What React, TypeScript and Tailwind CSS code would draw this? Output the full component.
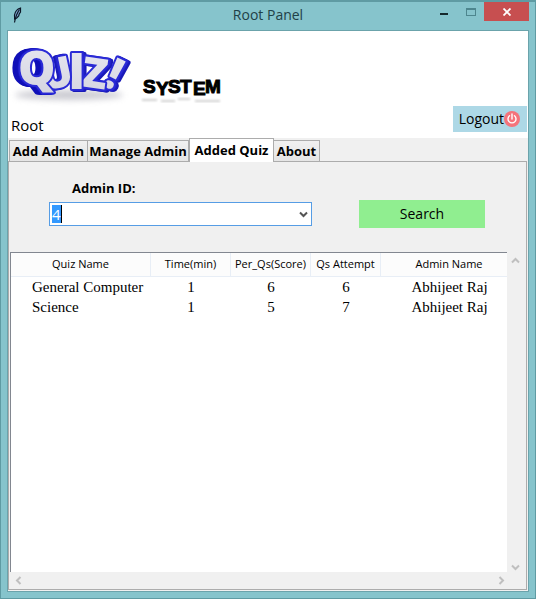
import React, { useState } from "react";

type Quiz = { name: string; time: number; score: number; attempt: number; admin: string };

const quizzes: Quiz[] = [
  { name: "General Computer", time: 1, score: 6, attempt: 6, admin: "Abhijeet Raj" },
  { name: "Science", time: 1, score: 5, attempt: 7, admin: "Abhijeet Raj" },
];

const tabs = [
  { label: "Add Admin", width: "w-[79px]" },
  { label: "Manage Admin", width: "w-[101px]" },
  { label: "Added Quiz", width: "w-[85px]" },
  { label: "About", width: "w-[46px]" },
];

const columns = [
  { label: "Quiz Name", width: "w-[140px]" },
  { label: "Time(min)", width: "w-[80px]" },
  { label: "Per_Qs(Score)", width: "w-[80px]" },
  { label: "Qs Attempt", width: "w-[70px]" },
  { label: "Admin Name", width: "" },
];

const turns = { up: "", right: "rotate-90", down: "rotate-180", left: "-rotate-90" };

function Chevron({ dir, color }: { dir: keyof typeof turns; color: string }) {
  return (
    <svg viewBox="0 0 9 9" className={`size-[9px] ${turns[dir]} ${color}`} aria-hidden="true">
      <path d="M1 6.5 4.5 3 8 6.5" fill="none" stroke="currentColor" strokeWidth="2" />
    </svg>
  );
}

function Feather() {
  return (
    <svg viewBox="0 0 12 18" className="h-[18px] w-3" aria-hidden="true">
      <path d="M9.500 2C6 3 4 6 3.500 9l.2 4 2-1 2-2 .5-2L9.500 6z" fill="#7fa6d0" stroke="#0b1626" strokeWidth="1.200" />
      <path d="M8.500 3.500C6 7 4.500 11 3.500 16.500" fill="none" stroke="#0b1626" strokeWidth="1.200" />
    </svg>
  );
}

function Logo() {
  return (
    <svg viewBox="0 0 220 74" className="h-[74px] w-[220px] overflow-visible" role="img" aria-label="Quiz! System">
      <defs>
        <linearGradient id="face" x1="0" y1="0" x2="0" y2="1">
          <stop offset="0" stopColor="#e9e9f2" />
          <stop offset="1" stopColor="#d3d3df" />
        </linearGradient>
        <filter id="soft" x="-20%" y="-100%" width="140%" height="300%">
          <feGaussianBlur stdDeviation="3" />
        </filter>
        <filter id="softer" x="-20%" y="-100%" width="140%" height="300%">
          <feGaussianBlur stdDeviation="1" />
        </filter>
      </defs>
      <ellipse cx="58" cy="56" rx="54" ry="5" fill="#a9a9b4" opacity=".6" filter="url(#soft)" />
      <g
        fontFamily="'Open Sans', 'Liberation Sans', sans-serif"
        fontWeight="800"
        fill="url(#face)"
        stroke="#2a2ad6"
        strokeWidth="4"
        strokeLinejoin="round"
        paintOrder="stroke"
      >
        <g className="[filter:drop-shadow(1px_0_0_#2222cc)_drop-shadow(2px_1px_0_#1a1ab8)]">
          <text x="91" y="46" fontSize="44" transform="rotate(26 91 46)">!</text>
          <text x="69" y="47" fontSize="42" transform="rotate(8 69 47)">Z</text>
          <text x="57" y="50" fontSize="50">I</text>
        </g>
        <g className="[filter:drop-shadow(-1px_0_0_#2222cc)_drop-shadow(-2px_0_0_#1a1ab8)]">
          <text x="33" y="52" fontSize="42" transform="rotate(-12 33 52)">U</text>
        </g>
        <g className="[filter:drop-shadow(-1px_0_0_#1515c4)_drop-shadow(-2px_0_0_#1010b8)_drop-shadow(-3px_0_0_#1010b8)]">
          <text x="7" y="46" fontSize="47">Q</text>
        </g>
      </g>
      <text
        x="132 145 157 169 182 194"
        y="54 56 54 54 56 54"
        fontFamily="'Liberation Sans', Arial, sans-serif"
        fontWeight="700"
        fontSize="19"
        fill="#000"
        stroke="#000"
        strokeWidth="1"
      >
        SYSTEM
      </text>
      <path d="M131 61h15m4 1h14m3-2h12m5 2h25" stroke="#8d8d8d" strokeWidth="2" opacity=".4" filter="url(#softer)" />
    </svg>
  );
}

function PowerIcon() {
  return (
    <svg viewBox="0 0 16 16" className="size-4" aria-hidden="true">
      <circle cx="8" cy="8" r="8" fill="#f4737b" />
      <path d="M8 3v5M5.500 4.800a4 4 0 1 0 5 0" fill="none" stroke="#fff" strokeWidth="1.400" strokeLinecap="round" />
    </svg>
  );
}

export default function App() {
  const [active, setActive] = useState("Added Quiz");
  const [adminId, setAdminId] = useState("4");

  return (
    <div className="flex min-h-screen flex-col border border-t-2 border-[#5f9ba3] bg-[#86c4cc] px-[6px] pb-[6px] font-['Open_Sans',sans-serif] text-black">
      <header className="grid h-7 grid-cols-[1fr_auto_1fr] items-start">
        <div className="pt-1 pl-1">
          <Feather />
        </div>
        <h1 className="pt-[3px] text-sm leading-5 text-[#1f4147]">Root Panel</h1>
        <div className="flex justify-end">
          <button type="button" aria-label="Minimize" className="flex h-[19px] w-7 items-center justify-center">
            <span className="mt-[5px] h-[2px] w-2 bg-[#16292c]" />
          </button>
          <button type="button" aria-label="Maximize" className="flex h-[19px] w-[26px] items-center justify-center">
            <span className="h-2 w-[10px] border border-t-2 border-[#4d868e]" />
          </button>
          <button type="button" aria-label="Close" className="flex h-[19px] w-[45px] items-center justify-center bg-[#c74f50]">
            <svg viewBox="0 0 8 8" className="size-2" aria-hidden="true">
              <path d="M.5.5l7 7M7.500.5l-7 7" stroke="#fff" strokeWidth="1.800" />
            </svg>
          </button>
        </div>
      </header>

      <main className="flex grow flex-col border border-[#6ba3ab] bg-white">
        <div className="flex items-end justify-between pt-2 pr-[1px] pl-[3px]">
          <div>
            <Logo />
            <p className="pb-[1px] text-[15px] leading-6">Root</p>
          </div>
          <button type="button" className="mb-[6px] flex h-[26px] items-center bg-[#add8e6] pr-[7px] pl-[6px] text-sm">
            Logout
            <PowerIcon />
          </button>
        </div>

        <section className="flex grow flex-col bg-[#f0f0f0] pr-[1px] pb-[1px]">
          <div role="tablist" className="flex h-[23px] items-end pl-[1px]">
            {tabs.map((t) => {
              const on = t.label === active;
              return (
                <button
                  key={t.label}
                  type="button"
                  role="tab"
                  aria-selected={on}
                  onClick={() => setActive(t.label)}
                  className={`${t.width} ${
                    on ? "z-10 -mb-px h-[24px] bg-white pb-[2px]" : "h-[21px] bg-[linear-gradient(#f0f0f0,#e5e5e5)] not-first:border-l-0"
                  } border border-b-0 border-[#acacac] text-center text-[13px] leading-5 font-bold whitespace-nowrap`}
                >
                  {t.label}
                </button>
              );
            })}
          </div>

          <div role="tabpanel" className="flex grow flex-col border border-[#acacac]">
            <div className="flex items-end gap-[47px] pt-4 pl-10">
              <div className="w-[263px]">
                <label htmlFor="admin-id" className="block pb-1 pl-[23px] text-[13px] leading-5 font-bold">
                  Admin ID:
                </label>
                <div className="flex h-6 items-center border border-[#569de5] bg-white pl-[2px]">
                  <input
                    id="admin-id"
                    role="combobox"
                    aria-expanded="false"
                    aria-controls="quiz-table"
                    value={adminId}
                    onChange={(e) => setAdminId(e.target.value)}
                    className="h-[18px] min-w-0 grow bg-[linear-gradient(to_right,#3399ff_9px,#000_9px,#000_10px,transparent_10px)] text-[15px] leading-[18px] text-white outline-none"
                  />
                  <button type="button" aria-label="Show admin IDs" className="flex w-4 justify-center">
                    <Chevron dir="down" color="text-[#555555]" />
                  </button>
                </div>
              </div>
              <button type="button" className="mb-[-2px] h-7 w-[126px] bg-[#90ee90] text-sm">
                Search
              </button>
            </div>

            <div className="mt-[26px] grid grow grid-cols-[1fr_19px] grid-rows-[1fr_17px] pl-[1px]">
              <div className="overflow-hidden border-t border-l border-[#828790] bg-white">
                <table id="quiz-table" className="w-full min-w-[507px] table-fixed border-separate border-spacing-0">
                  <thead>
                    <tr className="h-6 bg-[#fcfcfc]">
                      {columns.map((c) => (
                        <th
                          key={c.label}
                          scope="col"
                          className={`${c.width} border-r border-b border-[#e8eef6] p-0 text-center text-[11px] font-normal whitespace-nowrap`}
                        >
                          {c.label}
                        </th>
                      ))}
                    </tr>
                  </thead>
                  <tbody className="font-['Liberation_Serif',serif] text-[15px]">
                    {quizzes.map((q) => (
                      <tr key={q.name} className="h-5 text-center leading-5">
                        <td className="p-0 pl-[21px] text-left whitespace-nowrap">{q.name}</td>
                        <td className="p-0">{q.time}</td>
                        <td className="p-0">{q.score}</td>
                        <td className="p-0">{q.attempt}</td>
                        <td className="p-0">{q.admin}</td>
                      </tr>
                    ))}
                  </tbody>
                </table>
              </div>
              <div className="flex flex-col items-center justify-between pt-1 pr-[3px]">
                <Chevron dir="up" color="text-[#bfbfbf]" />
                <Chevron dir="down" color="text-[#bfbfbf]" />
              </div>
              <div className="flex items-center justify-between pr-[1px] pl-1">
                <Chevron dir="left" color="text-[#bfbfbf]" />
                <Chevron dir="right" color="text-[#bfbfbf]" />
              </div>
            </div>
          </div>
        </section>
      </main>
    </div>
  );
}
